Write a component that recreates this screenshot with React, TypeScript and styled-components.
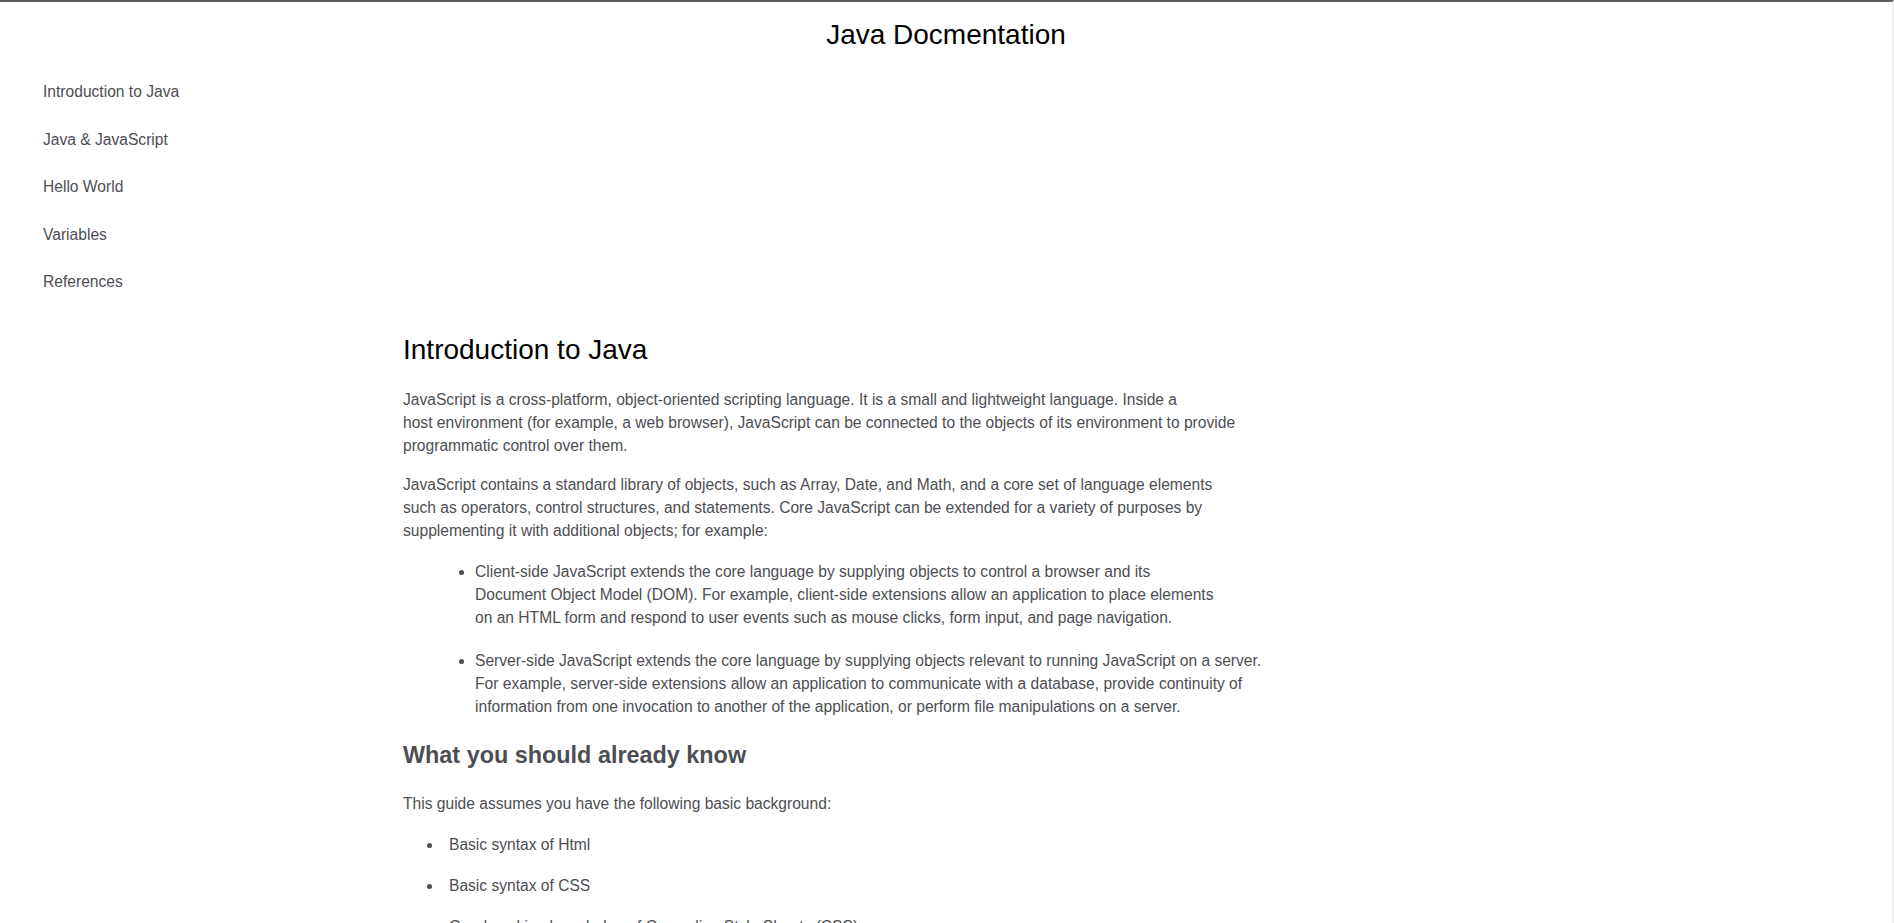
import React from 'react'
import styled, { createGlobalStyle } from 'styled-components'

const GlobalStyle = createGlobalStyle`
    html, body {
        margin: 0;
        padding: 0;
        background: #ffffff;
        overflow: hidden;
    }
    body {
        font-family: "Liberation Sans", Arial, sans-serif;
        color: #4d4e53;
    }
`

const Page = styled.div`
    height: 100vh;
    box-sizing: border-box;
    border-top: 2px solid #5c5c5c;
    border-right: 2px solid #efefef;
    overflow: hidden;
`

const Title = styled.h1`
    margin: 0;
    padding-top: 17px;
    font-size: 28px;
    line-height: 32px;
    font-weight: normal;
    color: #000000;
    text-align: center;
`

const Nav = styled.nav`
    padding: 31px 0 0 43px;
`

const NavList = styled.ul`
    list-style: none;
    margin: 0;
    padding: 0;
    display: flex;
    flex-direction: column;
    gap: 27.5px;
`

const NavLink = styled.a`
    display: block;
    font-size: 15.6px;
    line-height: 20px;
    color: #4d4e53;
    text-decoration: none;
`

const Main = styled.main`
    padding: 41px 0 0 403px;
    max-width: 880px;
`

const SectionTitle = styled.h2`
    margin: 0 0 21px;
    font-size: 28px;
    line-height: 34px;
    font-weight: normal;
    color: #000000;
`

const SubTitle = styled.h3`
    margin: 24px 0;
    font-size: 23.4px;
    line-height: 26px;
    font-weight: bold;
    color: #4d4e53;
`

const Text = styled.p`
    margin: 16px 0;
    font-size: 15.6px;
    line-height: 23px;
`

const List = styled.ul<{ $indent: number; $gap: number; $shift: number }>`
    margin: 18px 0 0;
    padding-left: ${p => p.$indent}px;
    font-size: 15.6px;
    line-height: 23px;

    li {
        padding-left: ${p => p.$shift}px;
        margin-bottom: ${p => p.$gap}px;
    }
`

const navItems = ['Introduction to Java', 'Java & JavaScript', 'Hello World', 'Variables', 'References']

const App = () => {
    return (
        <Page>
            <GlobalStyle />
            <Title>Java Docmentation</Title>
            <Nav>
                <NavList>
                    {navItems.map(item => (
                        <li key={item}>
                            <NavLink href={'#' + item.replace(/\W+/g, '_')}>{item}</NavLink>
                        </li>
                    ))}
                </NavList>
            </Nav>
            <Main>
                <section id="Introduction_to_Java">
                    <SectionTitle>Introduction to Java</SectionTitle>
                    <Text>
                        JavaScript is a cross-platform, object-oriented scripting language. It is a small and lightweight language. Inside a<br />
                        host environment (for example, a web browser), JavaScript can be connected to the objects of its environment to provide<br />
                        programmatic control over them.
                    </Text>
                    <Text>
                        JavaScript contains a standard library of objects, such as Array, Date, and Math, and a core set of language elements<br />
                        such as operators, control structures, and statements. Core JavaScript can be extended for a variety of purposes by<br />
                        supplementing it with additional objects; for example:
                    </Text>
                    <List $indent={72} $gap={20} $shift={0}>
                        <li>
                            Client-side JavaScript extends the core language by supplying objects to control a browser and its<br />
                            Document Object Model (DOM). For example, client-side extensions allow an application to place elements<br />
                            on an HTML form and respond to user events such as mouse clicks, form input, and page navigation.
                        </li>
                        <li>
                            Server-side JavaScript extends the core language by supplying objects relevant to running JavaScript on a server.<br />
                            For example, server-side extensions allow an application to communicate with a database, provide continuity of<br />
                            information from one invocation to another of the application, or perform file manipulations on a server.
                        </li>
                    </List>
                    <SubTitle>What you should already know</SubTitle>
                    <Text>This guide assumes you have the following basic background:</Text>
                    <List $indent={40} $gap={18} $shift={6}>
                        <li>Basic syntax of Html</li>
                        <li>Basic syntax of CSS</li>
                        <li>Good working knowledge of Cascading Style Sheets (CSS)</li>
                    </List>
                </section>
            </Main>
        </Page>
    )
}

export default App
